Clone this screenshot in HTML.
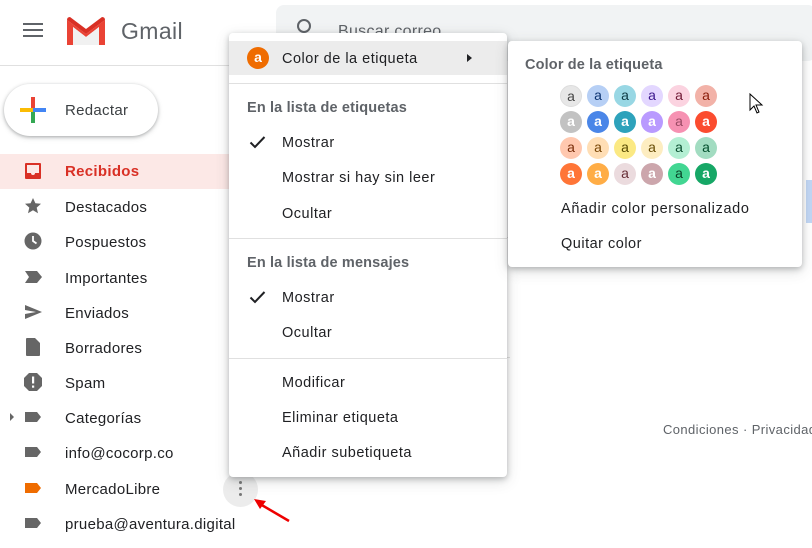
<!DOCTYPE html>
<html><head><meta charset="utf-8"><style>
*{margin:0;padding:0;box-sizing:border-box}
body{width:812px;height:548px;overflow:hidden;background:#fff;font-family:"Liberation Sans",Arial,sans-serif;color:#202124;position:relative}
.a{position:absolute}
.t{position:absolute;font-size:15px;line-height:18px;white-space:nowrap;letter-spacing:.3px}
.ic{position:absolute;left:23px;width:20px;height:20px}
.m{position:absolute;font-size:14.5px;color:#202124;white-space:nowrap;line-height:18px;letter-spacing:.5px}
.h{position:absolute;font-size:14.5px;color:#5f6368;font-weight:bold;white-space:nowrap;line-height:18px;letter-spacing:.15px}
.c{position:absolute;width:22px;height:22px;border-radius:50%;font-size:14px;line-height:21px;text-align:center;font-weight:bold}
</style></head><body>
<!-- header -->
<div class="a" style="left:23px;top:23px;width:20px;height:2px;background:#5f6368;box-shadow:0 6px 0 #5f6368,0 12px 0 #5f6368"></div>
<svg class="a" style="left:65px;top:16px" width="42" height="30" viewBox="0 0 42 30"><path d="M2 4 L21 18 L40 4 L40 29 L34 29 L34 11 L21 21 L8 11 L8 29 L2 29Z" fill="#ea4335"/><path d="M8 11 L21 21 L34 11 L34 29 L8 29Z" fill="#f1f1f1"/><path d="M2 4 Q2 1 5 1 L21 13 L37 1 Q40 1 40 4 L21 18Z" fill="#d93025"/></svg>
<div class="t" style="left:121px;top:18px;font-size:23px;line-height:26px;color:#5f6368;letter-spacing:.4px">Gmail</div>
<div class="a" style="left:276px;top:5px;width:540px;height:56px;background:#f1f3f4;border-radius:8px"></div>
<div class="t" style="left:338px;top:23px;font-size:16px;color:#5f6368">Buscar correo</div>
<div class="a" style="left:297px;top:19px;width:14px;height:14px;border:2px solid #5f6368;border-radius:50%"></div>
<div class="a" style="left:0;top:65px;width:276px;height:1px;background:#e0e0e0"></div>
<!-- compose -->
<div class="a" style="left:4px;top:84px;width:154px;height:52px;border-radius:26px;background:#fff;box-shadow:0 1px 3px rgba(60,64,67,.35),0 2px 6px rgba(60,64,67,.15)"></div>
<svg class="a" style="left:20px;top:97px" width="27" height="27" viewBox="0 0 27 27"><rect x="11" y="0" width="4" height="13" fill="#ea4335"/><rect x="11" y="13" width="4" height="13" fill="#34a853"/><rect x="0" y="11" width="13" height="4" fill="#fbbc04"/><rect x="13" y="11" width="13" height="4" fill="#4285f4"/></svg>
<div class="t" style="left:65px;top:102px;color:#3c4043">Redactar</div>
<!-- sidebar -->
<div class="a" style="left:0;top:154px;width:240px;height:35px;background:#fce8e6"></div>
<svg class="ic" style="top:161px" viewBox="0 0 20 20"><path d="M3 2h14a1 1 0 011 1v14a1 1 0 01-1 1H3a1 1 0 01-1-1V3a1 1 0 011-1zm1 2v8h4a2 2 0 004 0h4V4z" fill="#d93025"/></svg>
<div class="t" style="left:65px;top:163px;color:#d93025;font-weight:bold">Recibidos</div>
<svg class="ic" style="top:196px" viewBox="0 0 20 20"><path d="M10 2l2.4 5.3 5.6.5-4.3 3.8 1.3 5.6L10 14.3 5 17.2l1.3-5.6L2 7.8l5.6-.5z" fill="#666"/></svg>
<div class="t" style="left:65px;top:199px">Destacados</div>
<svg class="ic" style="top:231px" viewBox="0 0 20 20"><circle cx="10" cy="10" r="8.5" fill="#666"/><path d="M10 5v5l3.5 2.5" stroke="#fff" stroke-width="1.8" fill="none"/></svg>
<div class="t" style="left:65px;top:234px">Pospuestos</div>
<svg class="ic" style="top:267px" viewBox="0 0 20 20"><path d="M2 4h12l5 6-5 6H2l4-6z" fill="#666"/></svg>
<div class="t" style="left:65px;top:270px">Importantes</div>
<svg class="ic" style="top:302px" viewBox="0 0 20 20"><path d="M2 3l17 7-17 7v-5l11-2-11-2z" fill="#666"/></svg>
<div class="t" style="left:65px;top:305px">Enviados</div>
<svg class="ic" style="top:337px" viewBox="0 0 20 20"><path d="M4 1h8l5 5v12a1 1 0 01-1 1H4a1 1 0 01-1-1V2a1 1 0 011-1z" fill="#666"/></svg>
<div class="t" style="left:65px;top:340px">Borradores</div>
<svg class="ic" style="top:372px" viewBox="0 0 20 20"><path d="M6 1h8l5 5v8l-5 5H6l-5-5V6z" fill="#666"/><rect x="9" y="4.5" width="2.2" height="7" fill="#fff"/><rect x="9" y="13.5" width="2.2" height="2.2" fill="#fff"/></svg>
<div class="t" style="left:65px;top:375px">Spam</div>
<div class="a" style="left:10px;top:413px;border-left:4px solid #666;border-top:4px solid transparent;border-bottom:4px solid transparent"></div>
<svg class="ic" style="top:407px" viewBox="0 0 20 20"><path d="M2 5h12l4 5-4 5H2z" fill="#666"/></svg>
<div class="t" style="left:65px;top:410px">Categorías</div>
<svg class="ic" style="top:442px" viewBox="0 0 20 20"><path d="M2 5h12l4 5-4 5H2z" fill="#666"/></svg>
<div class="t" style="left:65px;top:445px">info@cocorp.co</div>
<svg class="ic" style="top:478px" viewBox="0 0 20 20"><path d="M2 5h12l4 5-4 5H2z" fill="#ef6c00"/></svg>
<div class="t" style="left:65px;top:481px">MercadoLibre</div>
<svg class="ic" style="top:513px" viewBox="0 0 20 20"><path d="M2 5h12l4 5-4 5H2z" fill="#666"/></svg>
<div class="t" style="left:65px;top:516px">prueba@aventura.digital</div>
<div class="a" style="left:223px;top:472px;width:35px;height:35px;border-radius:50%;background:#ececec"></div>
<div class="a" style="left:239px;top:481px;width:3px;height:3px;border-radius:50%;background:#777;box-shadow:0 6px 0 #777,0 12px 0 #777"></div>
<svg class="a" style="left:252px;top:496px" width="40" height="28" viewBox="0 0 40 28"><path d="M37 25L8 8" stroke="#e00" stroke-width="2.5"/><path d="M2 3l12 2-6 8z" fill="#e00"/></svg>
<!-- background right -->
<div class="a" style="left:500px;top:237px;width:10px;height:1px;background:#e0e0e0"></div>
<div class="a" style="left:500px;top:357px;width:10px;height:1px;background:#e0e0e0"></div>
<div class="a" style="left:806px;top:180px;width:6px;height:43px;background:#c2d7f5"></div>
<div class="t" style="left:663px;top:421px;font-size:13px;color:#5f6368;letter-spacing:.4px">Condiciones · Privacidad</div>
<!-- menu 1 -->
<div class="a" style="left:229px;top:33px;width:278px;height:444px;background:#fff;border-radius:4px;box-shadow:0 2px 6px rgba(60,64,67,.3),0 4px 14px rgba(60,64,67,.18)"></div>
<div class="a" style="left:229px;top:41px;width:278px;height:34px;background:#ececec"></div>
<div class="c" style="left:247px;top:47px;background:#ef6c00;color:#fff">a</div>
<div class="m" style="left:282px;top:50px">Color de la etiqueta</div>
<div class="a" style="left:467px;top:54px;border-left:5px solid #202124;border-top:4px solid transparent;border-bottom:4px solid transparent"></div>
<div class="a" style="left:229px;top:83px;width:278px;height:1px;background:#e0e0e0"></div>
<div class="h" style="left:247px;top:99px">En la lista de etiquetas</div>
<svg class="a" style="left:249px;top:135px" width="17" height="14" viewBox="0 0 17 14"><path d="M1.5 7.5l4.5 4.5 9.5-10" stroke="#202124" stroke-width="2" fill="none"/></svg>
<div class="m" style="left:282px;top:134px">Mostrar</div>
<div class="m" style="left:282px;top:169px">Mostrar si hay sin leer</div>
<div class="m" style="left:282px;top:205px">Ocultar</div>
<div class="a" style="left:229px;top:238px;width:278px;height:1px;background:#e0e0e0"></div>
<div class="h" style="left:247px;top:254px">En la lista de mensajes</div>
<svg class="a" style="left:249px;top:290px" width="17" height="14" viewBox="0 0 17 14"><path d="M1.5 7.5l4.5 4.5 9.5-10" stroke="#202124" stroke-width="2" fill="none"/></svg>
<div class="m" style="left:282px;top:289px">Mostrar</div>
<div class="m" style="left:282px;top:324px">Ocultar</div>
<div class="a" style="left:229px;top:358px;width:278px;height:1px;background:#e0e0e0"></div>
<div class="m" style="left:282px;top:374px">Modificar</div>
<div class="m" style="left:282px;top:409px">Eliminar etiqueta</div>
<div class="m" style="left:282px;top:444px">Añadir subetiqueta</div>
<!-- menu 2 -->
<div class="a" style="left:508px;top:41px;width:294px;height:226px;background:#fff;border-radius:4px;box-shadow:0 2px 6px rgba(60,64,67,.3),0 4px 14px rgba(60,64,67,.18)"></div>
<div class="h" style="left:525px;top:56px">Color de la etiqueta</div>
<div class="c" style="left:560px;top:85px;background:#e7e7e7;color:#464646;border:1px solid #ddd;font-weight:normal">a</div>
<div class="c" style="left:587px;top:85px;background:#b6cff5;color:#0d3472;font-weight:normal">a</div>
<div class="c" style="left:614px;top:85px;background:#98d7e4;color:#0d3b44;font-weight:normal">a</div>
<div class="c" style="left:641px;top:85px;background:#e3d7ff;color:#3d188e;font-weight:normal">a</div>
<div class="c" style="left:668px;top:85px;background:#fbd3e0;color:#711a36;font-weight:normal">a</div>
<div class="c" style="left:695px;top:85px;background:#f2b2a8;color:#8a1c0a;font-weight:normal">a</div>
<div class="c" style="left:560px;top:111px;background:#c2c2c2;color:#fff">a</div>
<div class="c" style="left:587px;top:111px;background:#4a86e8;color:#fff">a</div>
<div class="c" style="left:614px;top:111px;background:#2da2bb;color:#fff">a</div>
<div class="c" style="left:641px;top:111px;background:#b99aff;color:#fff">a</div>
<div class="c" style="left:668px;top:111px;background:#f691b2;color:#994a64;font-weight:normal">a</div>
<div class="c" style="left:695px;top:111px;background:#fb4c2f;color:#fff">a</div>
<div class="c" style="left:560px;top:137px;background:#ffc8af;color:#7a2e0b;font-weight:normal">a</div>
<div class="c" style="left:587px;top:137px;background:#ffdeb5;color:#7a4706;font-weight:normal">a</div>
<div class="c" style="left:614px;top:137px;background:#fbe983;color:#594c05;font-weight:normal">a</div>
<div class="c" style="left:641px;top:137px;background:#fdedc1;color:#684e07;font-weight:normal">a</div>
<div class="c" style="left:668px;top:137px;background:#b3efd3;color:#0b4f30;font-weight:normal">a</div>
<div class="c" style="left:695px;top:137px;background:#a2dcc1;color:#04502e;font-weight:normal">a</div>
<div class="c" style="left:560px;top:163px;background:#ff7537;color:#fff">a</div>
<div class="c" style="left:587px;top:163px;background:#ffad46;color:#fff">a</div>
<div class="c" style="left:614px;top:163px;background:#ebdbde;color:#662e37;font-weight:normal">a</div>
<div class="c" style="left:641px;top:163px;background:#cca6ac;color:#fff">a</div>
<div class="c" style="left:668px;top:163px;background:#42d692;color:#094228;font-weight:normal">a</div>
<div class="c" style="left:695px;top:163px;background:#16a766;color:#fff">a</div>
<div class="m" style="left:561px;top:200px;letter-spacing:.65px">Añadir color personalizado</div>
<div class="m" style="left:561px;top:235px">Quitar color</div>
<svg class="a" style="left:749px;top:93px" width="16" height="22" viewBox="0 0 16 22"><path d="M1 1v16l4-4 3 7 2-1-3-7h6z" fill="#fff" stroke="#000" stroke-width="1"/></svg>
</body></html>
